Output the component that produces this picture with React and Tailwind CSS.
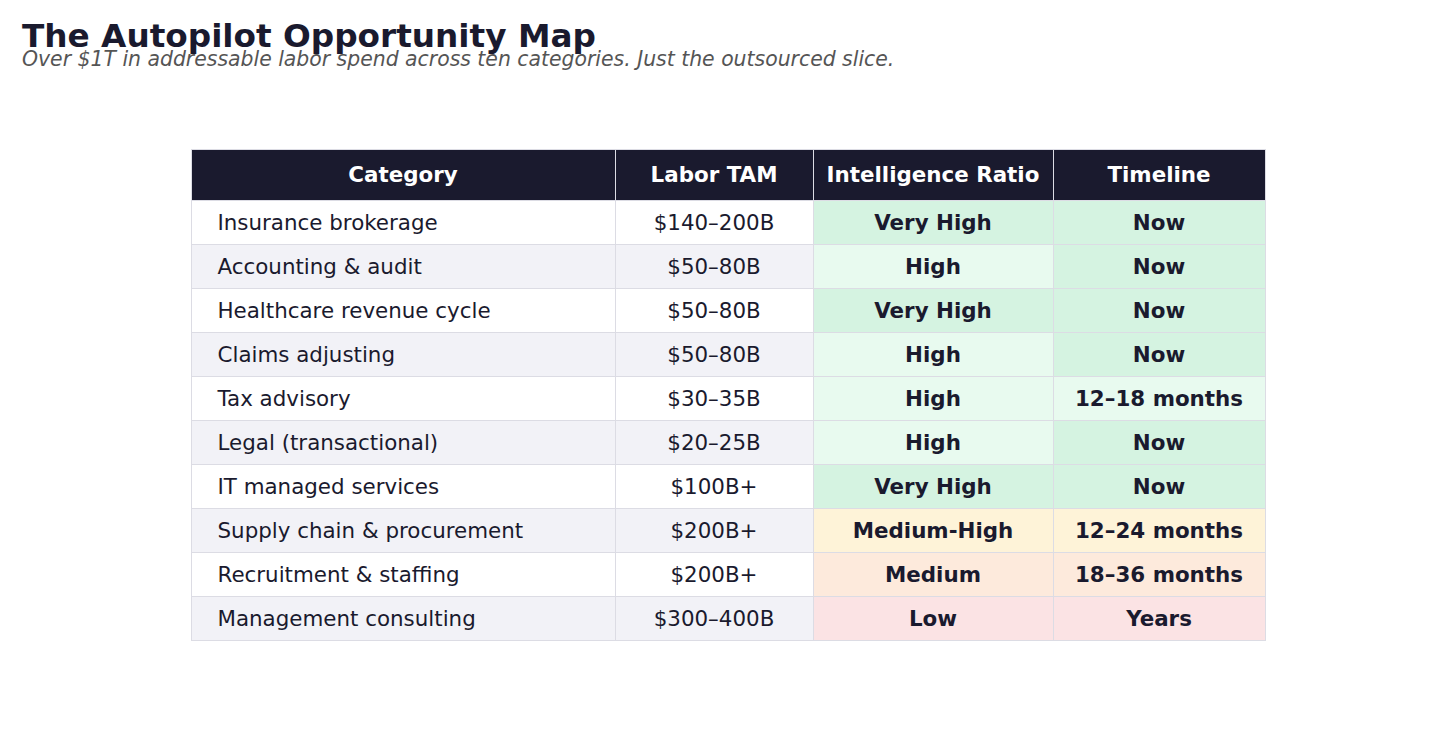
const rows = [
  ['Insurance brokerage', '$140–200B', 'Very High', 'vh', 'Now', 'vh'],
  ['Accounting & audit', '$50–80B', 'High', 'h', 'Now', 'vh'],
  ['Healthcare revenue cycle', '$50–80B', 'Very High', 'vh', 'Now', 'vh'],
  ['Claims adjusting', '$50–80B', 'High', 'h', 'Now', 'vh'],
  ['Tax advisory', '$30–35B', 'High', 'h', '12–18 months', 'h'],
  ['Legal (transactional)', '$20–25B', 'High', 'h', 'Now', 'vh'],
  ['IT managed services', '$100B+', 'Very High', 'vh', 'Now', 'vh'],
  ['Supply chain & procurement', '$200B+', 'Medium-High', 'mh', '12–24 months', 'mh'],
  ['Recruitment & staffing', '$200B+', 'Medium', 'm', '18–36 months', 'm'],
  ['Management consulting', '$300–400B', 'Low', 'l', 'Years', 'l'],
];

const tone = {
  vh: 'bg-[#d5f3e1]',
  h: 'bg-[#e8faef]',
  mh: 'bg-[#fef3d8]',
  m: 'bg-[#fdeadc]',
  l: 'bg-[#fbe3e4]',
};

export default function App() {
  return (
    <div className="min-h-[741px] bg-white text-[#1a1a2e] font-['DejaVu_Sans',sans-serif]">
      <div className="pl-[22px] pt-[20px]">
        <h1 className="text-[32.7px] leading-none font-bold">The Autopilot Opportunity Map</h1>
        <p className="-mt-[4px] text-[20.4px] leading-none italic text-[#555555]">
          Over $1T in addressable labor spend across ten categories. Just the outsourced slice.
        </p>
      </div>

      <table className="mx-auto mt-[80px] w-[1074px] table-fixed border-collapse text-[21.4px]">
        <colgroup>
          <col className="w-[424px]" />
          <col className="w-[198px]" />
          <col className="w-[240px]" />
          <col className="w-[212px]" />
        </colgroup>
        <thead>
          <tr className="h-[51px] bg-[#1a1a2e] text-white">
            {['Category', 'Labor TAM', 'Intelligence Ratio', 'Timeline'].map((h) => (
              <th key={h} className="border border-[#dcdce4] font-bold text-center whitespace-nowrap">
                {h}
              </th>
            ))}
          </tr>
        </thead>
        <tbody>
          {rows.map(([cat, tam, ratio, rt, time, tt], i) => {
            const stripe = i % 2 === 1 ? 'bg-[#f2f2f7]' : 'bg-white';
            return (
              <tr key={cat} className="h-[44px]">
                <td className={`border border-[#dcdce4] pl-[26px] ${stripe}`}>{cat}</td>
                <td className={`border border-[#dcdce4] text-center ${stripe}`}>{tam}</td>
                <td className={`border border-[#dcdce4] text-center font-bold ${tone[rt]}`}>{ratio}</td>
                <td className={`border border-[#dcdce4] text-center font-bold ${tone[tt]}`}>{time}</td>
              </tr>
            );
          })}
        </tbody>
      </table>
    </div>
  );
}
